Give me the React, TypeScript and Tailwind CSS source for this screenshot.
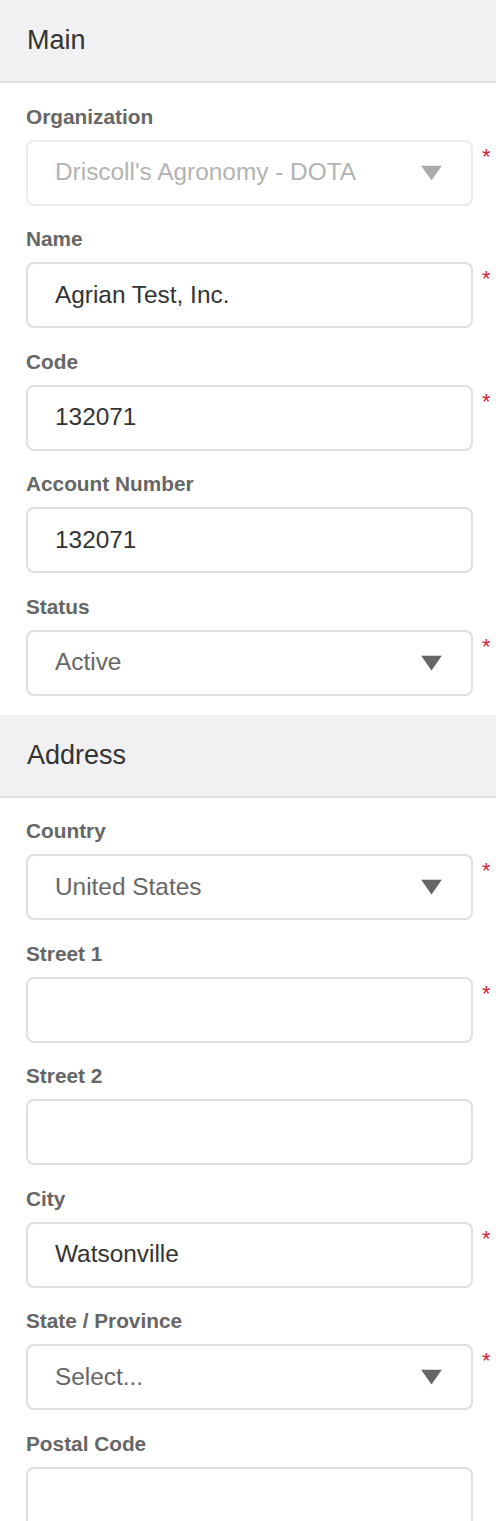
import React from 'react';

type Field = {
    label: string;
    value?: string;
    select?: boolean;
    disabled?: boolean;
    required?: boolean;
    muted?: boolean;
};

const mainFields: Field[] = [
    { label: 'Organization', value: "Driscoll's Agronomy - DOTA", select: true, disabled: true, required: true },
    { label: 'Name', value: 'Agrian Test, Inc.', required: true },
    { label: 'Code', value: '132071', required: true },
    { label: 'Account Number', value: '132071' },
    { label: 'Status', value: 'Active', select: true, required: true, muted: true },
];

const addressFields: Field[] = [
    { label: 'Country', value: 'United States', select: true, required: true, muted: true },
    { label: 'Street 1', required: true },
    { label: 'Street 2' },
    { label: 'City', value: 'Watsonville', required: true },
    { label: 'State / Province', value: 'Select...', select: true, required: true, muted: true },
    { label: 'Postal Code' },
];

const Caret = ({ disabled }: { disabled?: boolean }) => (
    <svg width="21" height="15" viewBox="0 0 21 15" className="absolute right-[29px] top-1/2 -translate-y-1/2">
        <polygon points="0,0 21,0 10.5,15" fill={disabled ? '#ababab' : '#666666'} />
    </svg>
);

const FormField = ({ field, first }: { field: Field; first: boolean }) => {
    const textColor = field.disabled ? 'text-[#b3b3b3]' : field.muted ? 'text-[#666666]' : 'text-[#333333]';
    return (
        <div className={first ? 'mt-[23.5px]' : 'mt-[23.5px]'}>
            <div className="text-[20.8px] leading-[20px] font-bold text-[#666666] mb-[13px]">{field.label}</div>
            <div className="flex">
                <div
                    className={`relative w-[447px] h-[66px] rounded-[8px] border-2 bg-white flex items-center pl-[27px] ${
                        field.disabled ? 'border-[#ececee]' : 'border-[#dfdfe2]'
                    }`}
                >
                    <span className={`text-[24.4px] leading-none ${textColor}`}>{field.value}</span>
                    {field.select && <Caret disabled={field.disabled} />}
                </div>
                <div className="flex-1 pl-[9px] pt-[6px]">
                    {field.required && <span className="text-[22px] leading-none text-[#d9173f]">*</span>}
                </div>
            </div>
        </div>
    );
};

const Section = ({ title, fields }: { title: string; fields: Field[] }) => (
    <div>
        <div className="h-[83px] bg-[#f1f1f3] border-b-2 border-[#dedee0] flex items-center pl-[27px]">
            <span className="text-[27px] text-[#333333] leading-none">{title}</span>
        </div>
        <div className="pl-[26px] pb-[19px]">
            {fields.map((f, i) => (
                <FormField key={f.label} field={f} first={i === 0} />
            ))}
        </div>
    </div>
);

export default function App() {
    return (
        <div className="w-[496px] h-[1521px] overflow-hidden bg-white" style={{ fontFamily: '"Liberation Sans", Arial, sans-serif' }}>
            <Section title="Main" fields={mainFields} />
            <Section title="Address" fields={addressFields} />
        </div>
    );
}
